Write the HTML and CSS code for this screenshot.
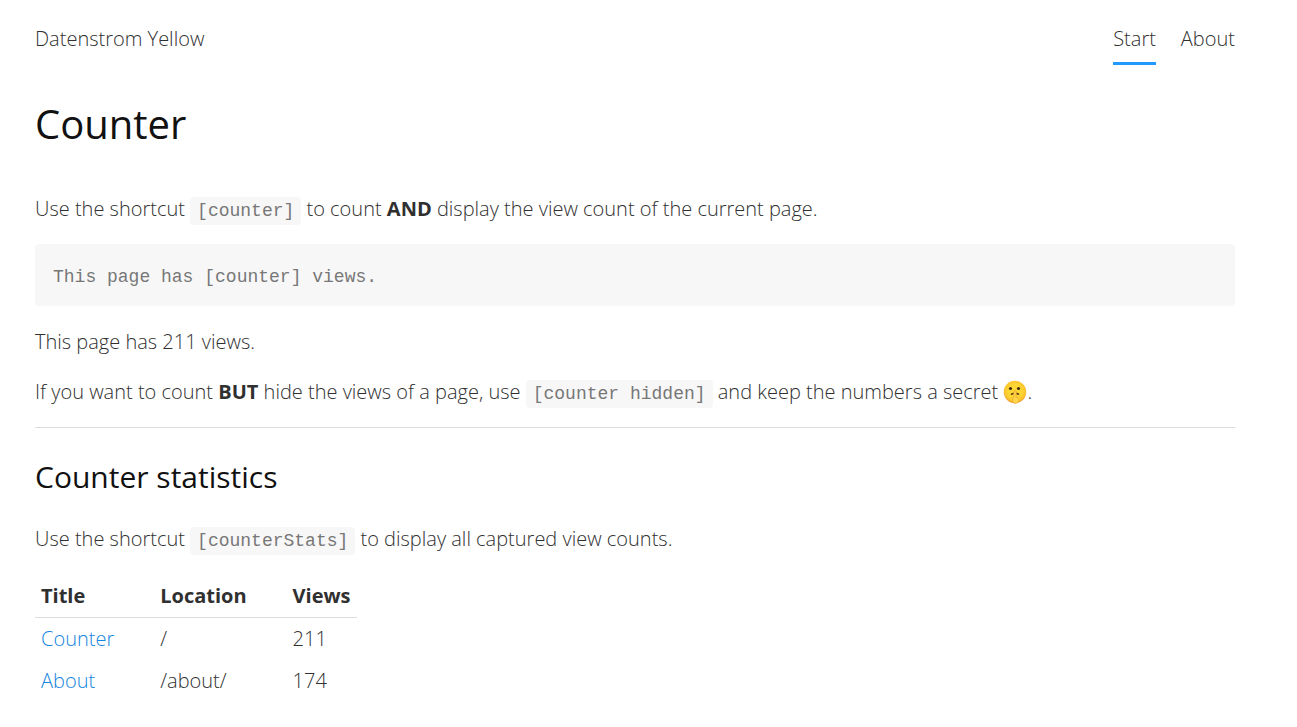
FILE: index.html
```html
<!DOCTYPE html>
<html lang="en">
<head>
<meta charset="utf-8">
<title>Counter - Datenstrom Yellow</title>
<link rel="stylesheet" href="styles.css">
</head>
<body>
<div class="page">
  <header class="header">
    <a class="sitename" href="#">Datenstrom Yellow</a>
    <nav class="navigation">
      <a class="nav-link active" href="#">Start</a>
      <a class="nav-link" href="#">About</a>
    </nav>
  </header>
  <main class="content">
    <h1>Counter</h1>
    <p>Use the shortcut <code>[counter]</code> to count <strong>AND</strong> display the view count of the current page.</p>
    <pre><code>This page has [counter] views.</code></pre>
    <p>This page has 211 views.</p>
    <p>If you want to count <strong>BUT</strong> hide the views of a page, use <code>[counter hidden]</code> and keep the numbers a secret <svg class="emoji" viewBox="0 0 24 24" role="img" aria-label="Shushing face">
      <defs><radialGradient id="face" cx="50%" cy="46%" r="54%"><stop offset="0.5" stop-color="#fdd835"/><stop offset="0.85" stop-color="#fbc52c"/><stop offset="1" stop-color="#f19534"/></radialGradient></defs>
      <circle cx="12" cy="12" r="11.2" fill="url(#face)"/>
      <ellipse cx="7.500" cy="8.500" rx="1.600" ry="1.500" fill="#422b0d"/>
      <ellipse cx="15.500" cy="8.500" rx="1.600" ry="1.500" fill="#422b0d"/>
      <path d="M8.500 14.200Q12 12.400 15.500 14.200" fill="none" stroke="#5d3c14" stroke-width="1.600" stroke-linecap="round"/>
      <path d="M12.200 10.500q1.200 0 1.100 1.500l-.3 5.200q3.400.2 3.200 2.800-.3 2.800-3 3.200h-1.800q-2.300-.6-2-3.200.3-1.800 1.300-2.600l.2-5.400q.1-1.500 1.300-1.500z" fill="#ffd54a" stroke="#eda52b" stroke-width=".7"/>
    </svg>.</p>
    <hr>
    <h2>Counter statistics</h2>
    <p>Use the shortcut <code>[counterStats]</code> to display all captured view counts.</p>
    <table>
      <thead><tr><th scope="col">Title</th><th scope="col">Location</th><th scope="col">Views</th></tr></thead>
      <tbody>
        <tr><td><a href="#">Counter</a></td><td>/</td><td>211</td></tr>
        <tr><td><a href="#">About</a></td><td>/about/</td><td>174</td></tr>
      </tbody>
    </table>
  </main>
</div>
</body>
</html>
```
FILE: styles.css
```css
* { box-sizing: border-box; }
body {
  margin: 0;
  background: #fff;
  color: #303030;
  font-family: "Open Sans", sans-serif;
  font-size: 20px;
  font-weight: 300;
  line-height: 30px;
}
a { color: #1585e0; text-decoration: none; }
.page { max-width: 1270px; padding: 24px 35px; }
.header { display: flex; justify-content: space-between; align-items: flex-start; }
.sitename, .nav-link { color: #303030; }
.navigation { display: flex; gap: 25px; }
.nav-link { padding-bottom: 8px; border-bottom: 3px solid transparent; }
.nav-link.active { border-bottom-color: #29f; }
h1, h2 { color: #111; font-weight: 400; }
h1 { margin: 31px 0 42px; font-size: 40px; line-height: 56px; }
h2 { margin: 28px 0 26px; font-size: 30px; line-height: 42px; }
p { margin: 0 0 20px; }
strong, th { font-weight: 700; }
code {
  padding: 4px 7px;
  border-radius: 4px;
  background: #f7f7f7;
  color: #777;
  font-family: "Courier New", "Liberation Mono", monospace;
  font-size: 18px;
  line-height: 20px;
}
pre { margin: 0 0 21px; padding: 16px 18px; border-radius: 4px; background: #f7f7f7; line-height: 30px; }
pre code { padding: 0; background: none; }
.emoji { width: 24px; height: 24px; vertical-align: -5px; }
hr { margin: 0; border: 0; border-top: 1px solid #ddd; }
table { margin-top: 21px; border-collapse: collapse; }
th, td { padding: 6px; text-align: left; line-height: 30px; }
th { border-bottom: 1px solid #ddd; }
th:not(:last-child), td:not(:last-child) { padding-right: 40px; }
```
